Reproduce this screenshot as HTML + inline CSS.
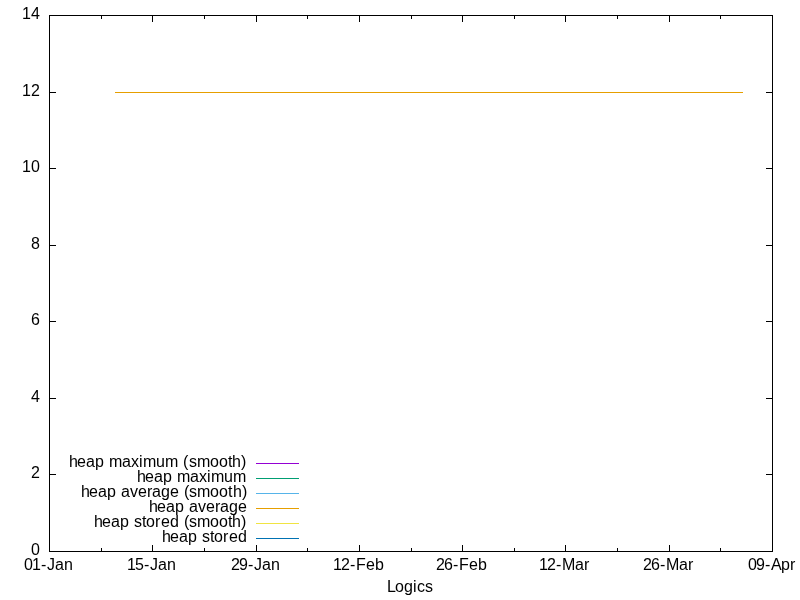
<!DOCTYPE html>
<html><head><meta charset="utf-8"><title>Logics</title>
<style>
html,body{margin:0;padding:0;background:#fff;}
body{width:800px;height:600px;overflow:hidden;}
svg{display:block;position:absolute;left:0;top:0;will-change:transform;}
text{font-family:"Liberation Sans",sans-serif;font-size:16px;fill:#000;white-space:pre;}
</style></head><body>
<svg width="800" height="600" viewBox="0 0 800 600" shape-rendering="crispEdges">
<g id="frame">
<rect x="49" y="15" width="724" height="1" fill="#000"/>
<rect x="49" y="551" width="724" height="1" fill="#000"/>
<rect x="49" y="15" width="1" height="537" fill="#000"/>
<rect x="772" y="15" width="1" height="537" fill="#000"/>
</g>
<g id="yticks">
<text x="22 31" y="19">14</text>
<rect x="49" y="92" width="7" height="1" fill="#000"/>
<rect x="766" y="92" width="7" height="1" fill="#000"/>
<text x="22 31" y="96">12</text>
<rect x="49" y="168" width="7" height="1" fill="#000"/>
<rect x="766" y="168" width="7" height="1" fill="#000"/>
<text x="22 31" y="172">10</text>
<rect x="49" y="245" width="7" height="1" fill="#000"/>
<rect x="766" y="245" width="7" height="1" fill="#000"/>
<text x="31" y="249">8</text>
<rect x="49" y="321" width="7" height="1" fill="#000"/>
<rect x="766" y="321" width="7" height="1" fill="#000"/>
<text x="31" y="325">6</text>
<rect x="49" y="398" width="7" height="1" fill="#000"/>
<rect x="766" y="398" width="7" height="1" fill="#000"/>
<text x="31" y="402">4</text>
<rect x="49" y="474" width="7" height="1" fill="#000"/>
<rect x="766" y="474" width="7" height="1" fill="#000"/>
<text x="31" y="478">2</text>
<text x="31" y="555">0</text>
</g>
<g id="xticks">
<text x="24 32 41 47 55 64" y="570">01-Jan</text>
<rect x="101" y="548" width="1" height="4" fill="#000"/>
<rect x="101" y="15" width="1" height="4" fill="#000"/>
<rect x="152" y="545" width="1" height="7" fill="#000"/>
<rect x="152" y="15" width="1" height="7" fill="#000"/>
<text x="127 135 144 150 158 167" y="570">15-Jan</text>
<rect x="204" y="548" width="1" height="4" fill="#000"/>
<rect x="204" y="15" width="1" height="4" fill="#000"/>
<rect x="256" y="545" width="1" height="7" fill="#000"/>
<rect x="256" y="15" width="1" height="7" fill="#000"/>
<text x="231 239 248 254 262 271" y="570">29-Jan</text>
<rect x="307" y="548" width="1" height="4" fill="#000"/>
<rect x="307" y="15" width="1" height="4" fill="#000"/>
<rect x="359" y="545" width="1" height="7" fill="#000"/>
<rect x="359" y="15" width="1" height="7" fill="#000"/>
<text x="333 341 350 356 366 375" y="570">12-Feb</text>
<rect x="411" y="548" width="1" height="4" fill="#000"/>
<rect x="411" y="15" width="1" height="4" fill="#000"/>
<rect x="462" y="545" width="1" height="7" fill="#000"/>
<rect x="462" y="15" width="1" height="7" fill="#000"/>
<text x="436 444 453 459 469 478" y="570">26-Feb</text>
<rect x="514" y="548" width="1" height="4" fill="#000"/>
<rect x="514" y="15" width="1" height="4" fill="#000"/>
<rect x="565" y="545" width="1" height="7" fill="#000"/>
<rect x="565" y="15" width="1" height="7" fill="#000"/>
<text x="539 547 556 562 575 584" y="570">12-Mar</text>
<rect x="617" y="548" width="1" height="4" fill="#000"/>
<rect x="617" y="15" width="1" height="4" fill="#000"/>
<rect x="669" y="545" width="1" height="7" fill="#000"/>
<rect x="669" y="15" width="1" height="7" fill="#000"/>
<text x="643 651 660 666 679 688" y="570">26-Mar</text>
<rect x="720" y="548" width="1" height="4" fill="#000"/>
<rect x="720" y="15" width="1" height="4" fill="#000"/>
<text x="748 756 765 771 781 790" y="570">09-Apr</text>
</g>
<text x="387 395 404 413 417 425" y="592">Logics</text>
<rect x="115" y="92" width="628" height="1" fill="#e69f00"/>
<g id="legend">
<text x="69 77 86 95 104 109 122 131 139 143 156 165 179 183 189 197 210 219 228 232 241" y="467">heap maximum (smooth)</text>
<rect x="256" y="463" width="43" height="1" fill="#9400d3"/>
<text x="137 145 154 163 172 177 190 199 207 211 224 233" y="482">heap maximum</text>
<rect x="256" y="478" width="43" height="1" fill="#009e73"/>
<text x="81 89 98 107 116 121 130 138 147 152 161 170 179 184 189 197 210 219 228 233 242" y="497">heap average (smooth)</text>
<rect x="256" y="493" width="43" height="1" fill="#56b4e9"/>
<text x="149 157 166 175 184 189 198 206 215 220 229 238" y="512">heap average</text>
<rect x="256" y="508" width="43" height="1" fill="#e69f00"/>
<text x="94 102 111 120 129 134 142 146 155 161 170 179 184 189 197 210 219 228 232 241" y="527">heap stored (smooth)</text>
<rect x="256" y="523" width="43" height="1" fill="#f0e442"/>
<text x="162 170 179 188 197 202 210 214 223 229 238" y="542">heap stored</text>
<rect x="256" y="538" width="43" height="1" fill="#0072b2"/>
</g>
</svg></body></html>
